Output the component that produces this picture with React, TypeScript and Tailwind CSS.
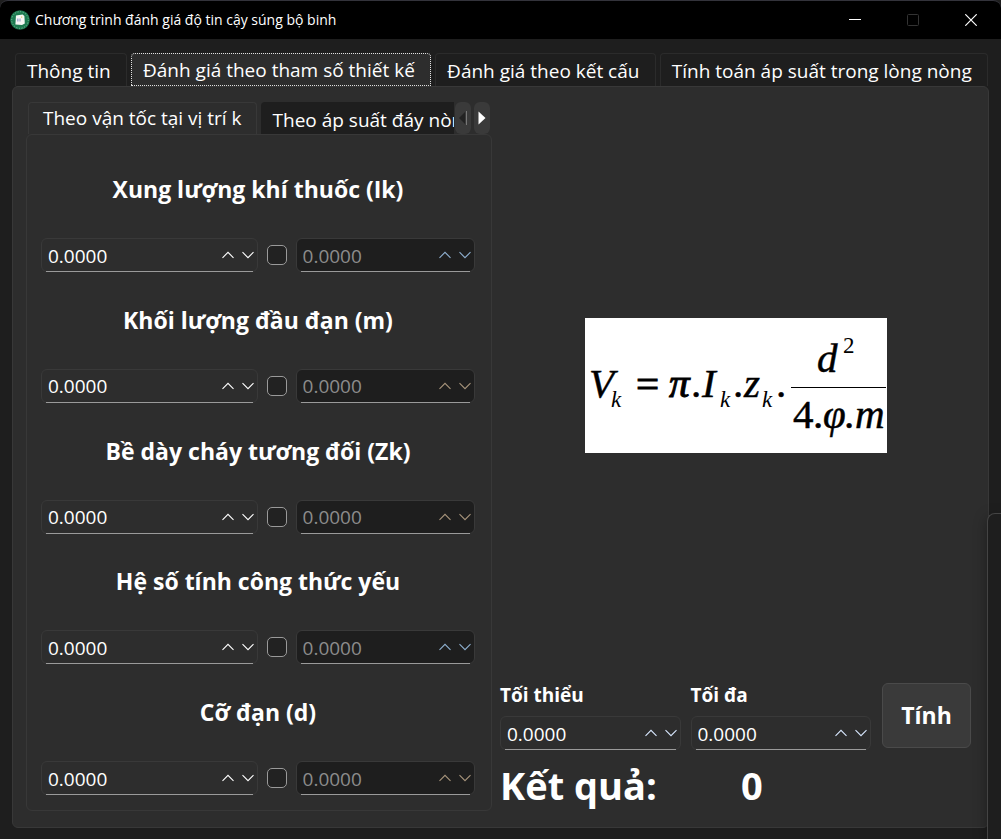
import React, { useState } from "react";

const PARAMETERS = [
  { id: "ik", label: "Xung lượng khí thuốc (Ik)", arrows: "text-[#8fb0d0]" },
  { id: "m", label: "Khối lượng đầu đạn (m)", arrows: "text-[#a8957c]" },
  { id: "zk", label: "Bề dày cháy tương đối (Zk)", arrows: "text-[#a8957c]" },
  { id: "phi", label: "Hệ số tính công thức yếu", arrows: "text-[#8fb0d0]" },
  { id: "d", label: "Cỡ đạn (d)", arrows: "text-[#a8957c]" },
];

const TABS = [
  "Thông tin",
  "Đánh giá theo tham số thiết kế",
  "Đánh giá theo kết cấu",
  "Tính toán áp suất trong lòng nòng",
];

function Chevron({ direction }: { direction: "up" | "down" }) {
  return (
    <svg width="12" height="8" viewBox="0 0 12 8" fill="none" stroke="currentColor" strokeWidth="1.1" aria-hidden="true">
      <path d={direction === "up" ? "M0.5 6.8 L6 1.3 L11.5 6.8" : "M0.5 1.2 L6 6.7 L11.5 1.2"} />
    </svg>
  );
}

type SpinProps = {
  id: string;
  name?: string;
  disabled?: boolean;
  arrows?: string;
};

function SpinBox({ id, name, disabled = false, arrows = "text-white" }: SpinProps) {
  const [value, setValue] = useState("0.0000");
  const step = (amount: number) => setValue((Number(value) + amount).toFixed(4));
  return (
    <div
      className={
        "relative flex h-[34px] min-w-0 items-center rounded-md border border-[#393939] pr-[3px] pl-[6px] after:absolute after:right-1 after:-bottom-px after:left-1 after:h-px after:bg-[#9a9a9a] after:content-[''] " +
        (disabled ? "bg-[#1e1e1e] text-[#8c8c8c]" : "bg-[#2d2d2d] text-white")
      }
    >
      <input
        id={id}
        type="text"
        inputMode="decimal"
        aria-label={name}
        disabled={disabled}
        value={value}
        onChange={(e) => setValue(e.target.value)}
        className="w-0 min-w-0 flex-1 bg-transparent pt-px text-[19px] leading-6 outline-none"
      />
      <div className={"flex gap-2 " + arrows}>
        <button type="button" aria-label="Tăng" disabled={disabled} onClick={() => step(1)}>
          <Chevron direction="up" />
        </button>
        <button type="button" aria-label="Giảm" disabled={disabled} onClick={() => step(-1)}>
          <Chevron direction="down" />
        </button>
      </div>
    </div>
  );
}

function AppLogo() {
  return (
    <svg width="20" height="20" viewBox="0 0 20 20" aria-hidden="true">
      <circle cx="10" cy="10" r="9.8" fill="#1d7a50" />
      <circle cx="10" cy="10" r="8.3" fill="none" stroke="#7dbb9c" strokeWidth="1" strokeDasharray="1 1.6" />
      <path d="M6 5.6 L12.6 4.4 L14.4 6 L14.8 13.6 L12 15 L5.4 14.6 Z" fill="#f5f7f4" />
      <rect x="7" y="8.5" width="1.6" height="3" fill="#a9b4d8" />
      <rect x="9.4" y="8.5" width="1.2" height="3" fill="#a0a8cc" />
      <rect x="11" y="6.5" width="1.2" height="1.2" fill="#e8c860" />
    </svg>
  );
}

function TitleBar() {
  return (
    <header className="flex h-[39px] shrink-0 items-center rounded-t-lg border-t border-[#33333b] bg-black pl-[10px] text-white">
      <AppLogo />
      <h1 className="flex-1 pl-[5px] text-sm leading-5">Chương trình đánh giá độ tin cậy súng bộ binh</h1>
      <div className="flex gap-[46px] pr-6">
        <button type="button" aria-label="Thu nhỏ">
          <svg width="12" height="12" viewBox="0 0 12 12" aria-hidden="true">
            <path d="M0 5.5 H12" stroke="#fff" />
          </svg>
        </button>
        <button type="button" aria-label="Phóng to" disabled>
          <svg width="12" height="12" viewBox="0 0 12 12" aria-hidden="true">
            <rect x="0.5" y="0.5" width="11" height="11" rx="1" fill="none" stroke="#333" />
          </svg>
        </button>
        <button type="button" aria-label="Đóng">
          <svg width="12" height="12" viewBox="0 0 12 12" aria-hidden="true">
            <path d="M0.3 0.3 L11.7 11.7 M11.7 0.3 L0.3 11.7" stroke="#fff" strokeWidth="1.2" />
          </svg>
        </button>
      </div>
    </header>
  );
}

function Formula() {
  return (
    <svg
      width="302"
      height="135"
      viewBox="0 0 302 135"
      className="bg-white font-['Liberation_Serif',serif] italic"
      role="img"
      aria-label="Công thức tính Vk"
    >
      <g fontSize="41" stroke="#000" strokeWidth="0.5">
        <text x="4" y="79">V</text>
        <text x="51" y="80" className="not-italic" strokeWidth="1">=</text>
        <text x="84" y="79" strokeWidth="1">π</text>
        <text x="107" y="79">.</text>
        <text x="117" y="79">I</text>
        <text x="149" y="79">.</text>
        <text x="159" y="79">z</text>
        <text x="192" y="79">.</text>
        <text x="232" y="54">d</text>
        <text x="208" y="110" className="not-italic">4</text>
        <text x="229" y="110">.</text>
        <text x="238" y="110">φ</text>
        <text x="260" y="110">.</text>
        <text x="270" y="110">m</text>
      </g>
      <g fontSize="23">
        <text x="26" y="89">k</text>
        <text x="135" y="89">k</text>
        <text x="177" y="89">k</text>
        <text x="258" y="35" className="not-italic">2</text>
      </g>
      <path d="M206 69.5 H301" stroke="#000" />
    </svg>
  );
}

function ParameterPanel() {
  const [enabled, setEnabled] = useState<Record<string, boolean>>({});
  return (
    <div className="flex min-w-0 flex-col">
      <div className="flex items-end pl-[2px]">
        <div role="tablist" className="flex min-w-0 flex-1 gap-1 overflow-hidden text-[19px] leading-6 whitespace-nowrap">
          <button
            type="button"
            role="tab"
            aria-selected="true"
            className="h-8 shrink-0 rounded-t border border-b-0 border-[#383838] bg-[#2d2d2d] px-[14px] pb-[2px]"
          >
            Theo vận tốc tại vị trí k
          </button>
          <button type="button" role="tab" aria-selected="false" className="h-8 shrink-0 rounded-t bg-[#1e1e1e] px-3 pt-1">
            Theo áp suất đáy nòng
          </button>
        </div>
        <div className="flex gap-[3px] pr-[2px] pl-px">
          <button type="button" aria-label="Cuộn trái" disabled className="flex h-8 w-4 items-center justify-center rounded-md bg-[#3a3a3a]">
            <svg width="8" height="14" viewBox="0 0 8 14" aria-hidden="true">
              <path d="M6 1 L0 7 L6 13 Z" fill="#222" />
              <path d="M7.5 0 V14" stroke="#777" />
            </svg>
          </button>
          <button type="button" aria-label="Cuộn phải" className="flex h-8 w-4 items-center justify-center rounded-md bg-[#3a3a3a]">
            <svg width="8" height="14" viewBox="0 0 8 14" aria-hidden="true">
              <path d="M0.5 0.5 L7.5 7 L0.5 13.5 Z" fill="#fff" />
            </svg>
          </button>
        </div>
      </div>
      <div className="flex flex-1 flex-col justify-between gap-5 rounded-md border border-[#383838] px-[14px] pt-[38px] pb-[15px]">
        {PARAMETERS.map((p) => (
          <section key={p.id} className="flex flex-col gap-[33px]">
            <label htmlFor={p.id} className="pr-[2px] text-center text-[23px] leading-8 font-bold">
              {p.label}
            </label>
            <div className="grid grid-cols-[216fr_20px_179fr] items-center gap-[9px] pr-[2px]">
              <SpinBox id={p.id} />
              <input
                type="checkbox"
                aria-label={"Dung sai " + p.label}
                checked={!!enabled[p.id]}
                onChange={(e) => setEnabled({ ...enabled, [p.id]: e.target.checked })}
                className="size-5 appearance-none rounded-[5px] border border-[#9a9a9a] bg-[#222] checked:bg-[#5a8fc0]"
              />
              <SpinBox
                id={p.id + "-tolerance"}
                name={"Giá trị dung sai " + p.label}
                disabled={!enabled[p.id]}
                arrows={p.arrows}
              />
            </div>
          </section>
        ))}
      </div>
    </div>
  );
}

function ResultPanel() {
  return (
    <div className="flex min-w-0 flex-col">
      <div className="flex flex-1 items-center justify-center pb-[14px]">
        <Formula />
      </div>
      <div className="flex items-start gap-[11px]">
        <div className="grid flex-1 grid-cols-2 gap-x-[10px] gap-y-[9px]">
          <label htmlFor="min" className="text-[19px] leading-6 font-bold">
            Tối thiểu
          </label>
          <label htmlFor="max" className="text-[19px] leading-6 font-bold">
            Tối đa
          </label>
          <SpinBox id="min" arrows="text-[#d8e8ff]" />
          <SpinBox id="max" arrows="text-[#d8e8ff]" />
        </div>
        <button
          type="button"
          className="h-[65px] w-[89px] rounded-md border border-[#4a4a4a] bg-[#3a3a3a] text-[23px] font-bold"
        >
          Tính
        </button>
      </div>
      <div className="flex h-[61px] items-center gap-[84px] pt-[9px] text-[38px] leading-[52px] font-bold">
        <span>Kết quả:</span>
        <output htmlFor="min max">0</output>
      </div>
    </div>
  );
}

export default function App() {
  const [tab, setTab] = useState(1);
  return (
    <div className="relative flex min-h-screen flex-col overflow-hidden bg-[#1e1e1e] font-['Open_Sans','Noto_Sans',sans-serif] text-white">
      <TitleBar />
      <main className="flex flex-1 flex-col px-3 pt-[14px] pb-[11px]">
        <div role="tablist" className="flex gap-1 pr-px pl-[3px] text-[19px] leading-6 whitespace-nowrap">
          {TABS.map((name, i) => (
            <button
              key={name}
              type="button"
              role="tab"
              aria-selected={i === tab}
              onClick={() => setTab(i)}
              className={
                i === tab
                  ? "h-[33px] grow rounded-t border border-dotted border-[#e0e0e0] bg-[#2d2d2d] pr-[14px] pl-[11px] text-left"
                  : "h-[33px] grow rounded-t border border-b-0 border-[#2b2b2b] pt-[2px] pr-[14px] pl-[11px] text-left"
              }
            >
              {name}
            </button>
          ))}
        </div>
        <div className="grid flex-1 grid-cols-[466fr_471fr] gap-2 rounded-md border border-[#383838] bg-[#2d2d2d] pt-[15px] pr-[17px] pb-4 pl-[13px]">
          <ParameterPanel />
          <ResultPanel />
        </div>
      </main>
      <div className="absolute right-0 bottom-0 h-[326px] w-[14px] rounded-tl-lg border-t border-l border-[#444] bg-[#1e1e1e] shadow-[0_4px_14px_rgba(0,0,0,0.35)]" />
    </div>
  );
}
